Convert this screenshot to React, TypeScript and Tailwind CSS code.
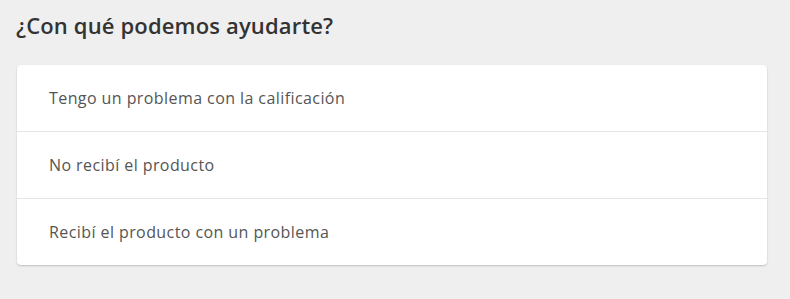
import React from 'react';

const opciones = [
  'Tengo un problema con la calificación',
  'No recibí el producto',
  'Recibí el producto con un problema',
];

export default function App() {
  return (
    <div
      className="w-[790px] h-[299px] bg-[#efefef] px-[17px] pt-[10px]"
      style={{ fontFamily: '"Open Sans", Lato, sans-serif' }}
    >
      <h1 className="text-[22px] leading-[30px] font-semibold tracking-[0.15px] text-[#333333] -ml-[1px]">
        ¿Con qué podemos ayudarte?
      </h1>
      <ul className="mt-[25px] w-[750px] bg-white rounded-[4px] shadow-[0_1px_2px_rgba(0,0,0,0.2)]">
        {opciones.map((texto, i) => (
          <li
            key={texto}
            className={`${i === 2 ? 'h-[66px]' : 'h-[67px]'} flex items-center pl-[32px] text-[16px] tracking-[0.42px] text-[#555555] ${
              i < opciones.length - 1 ? 'border-b border-[#e5e5e5]' : ''
            }`}
          >
            {texto}
          </li>
        ))}
      </ul>
    </div>
  );
}
